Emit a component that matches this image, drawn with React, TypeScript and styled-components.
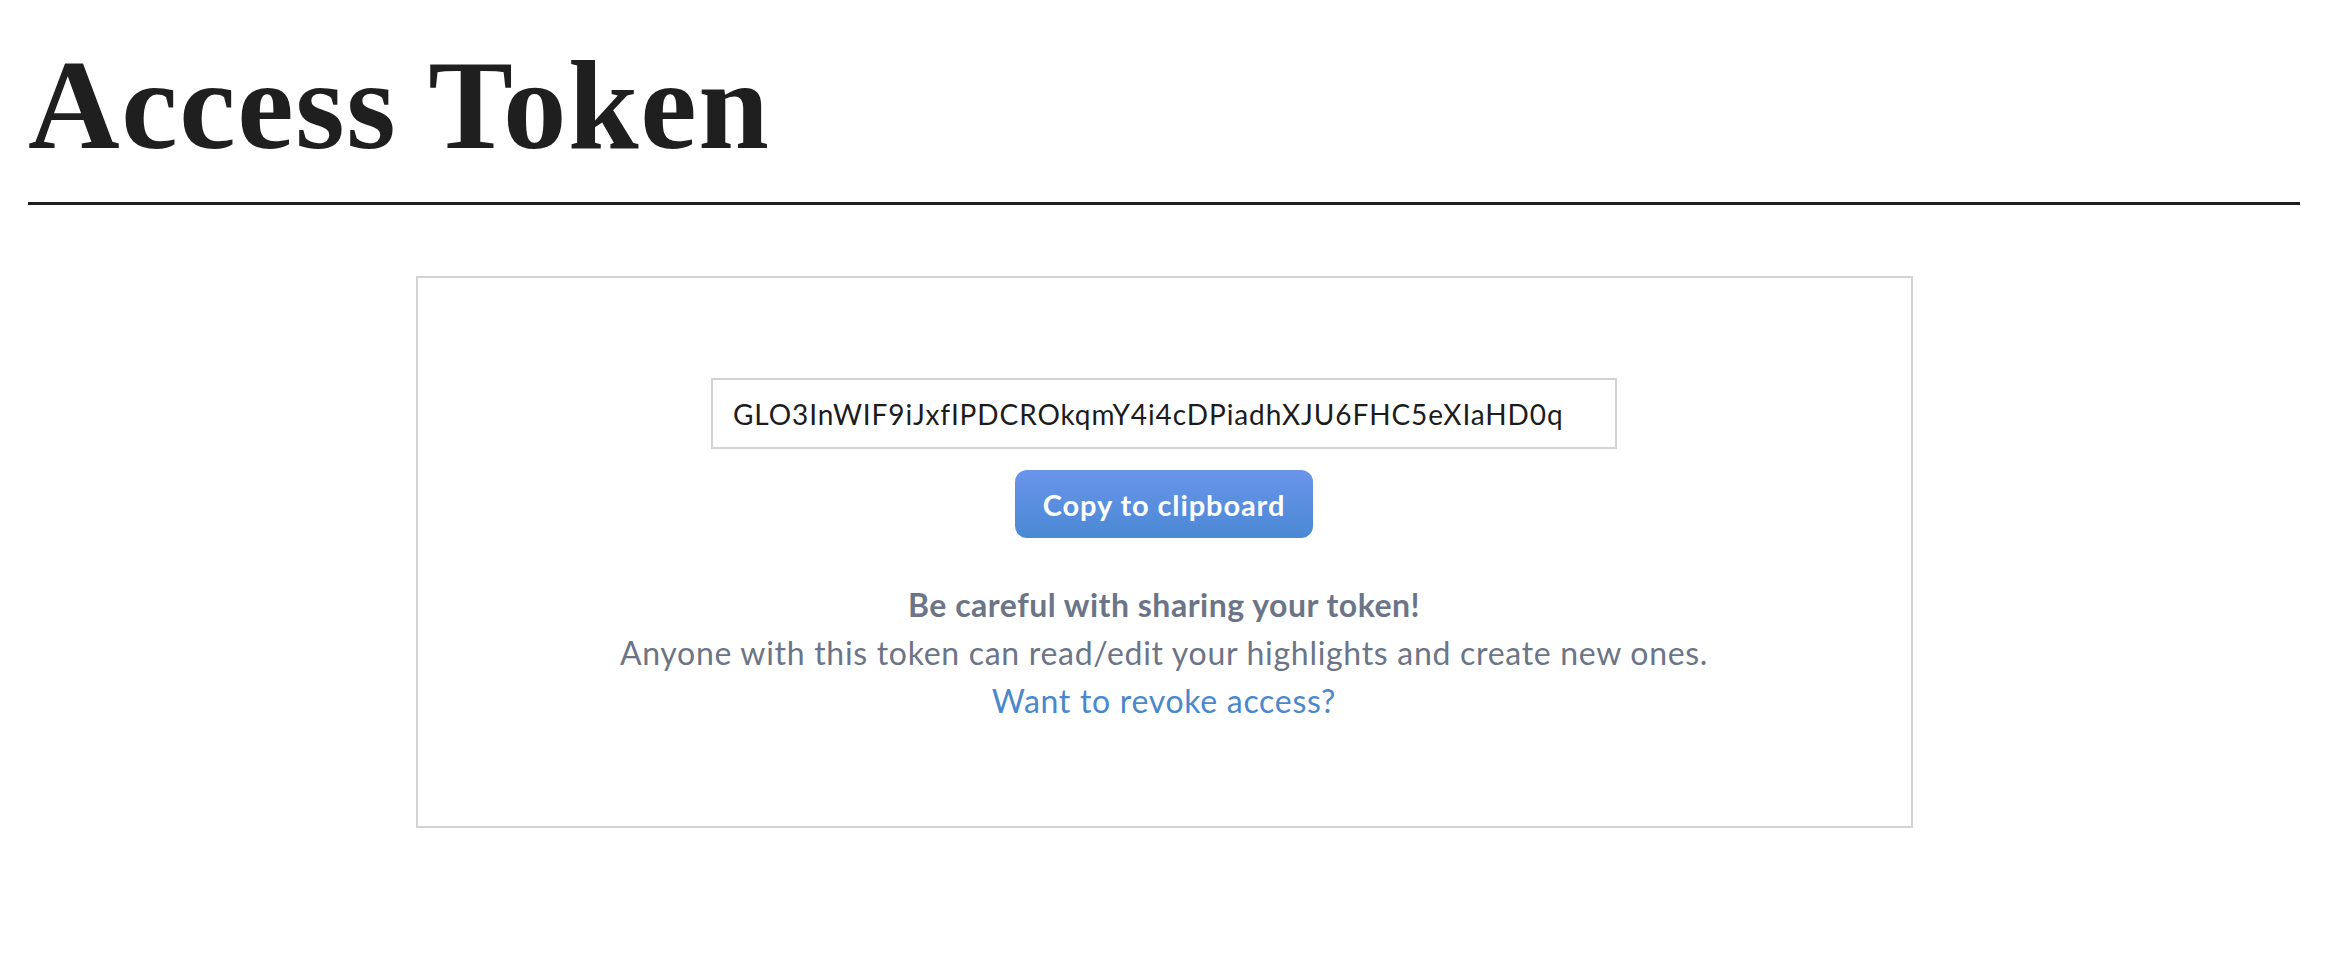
import React from 'react';
import styled, {createGlobalStyle} from 'styled-components';

const GlobalStyle = createGlobalStyle`
  html, body {
    margin: 0;
    padding: 0;
    background: #fff;
  }
  body {
    font-family: Lato, "Noto Sans", sans-serif;
  }
`;

const Page = styled.main`
  padding: 0 46px 0 28px;
`;

const Header = styled.header`
  padding-top: 42px;
  padding-bottom: 33px;
  border-bottom: 3px solid #1f1f1f;
`;

const Title = styled.h1`
  margin: 0;
  font-family: "Liberation Serif", "Times New Roman", serif;
  font-weight: 700;
  font-size: 127px;
  line-height: 127px;
  color: #1f1f1f;
  letter-spacing: 1.6px;
`;

const Card = styled.section`
  width: 1497px;
  box-sizing: border-box;
  margin: 71px auto 0;
  border: 2px solid #d3d3d3;
  padding: 100px 0 101px;
  display: flex;
  flex-direction: column;
  align-items: center;
`;

const TokenField = styled.input`
  width: 906px;
  height: 71px;
  box-sizing: border-box;
  border: 2px solid #d3d3d3;
  padding: 0 20px;
  font-family: Lato, "Noto Sans", sans-serif;
  font-size: 28px;
  letter-spacing: 0.9px;
  color: #1c1c1c;
  outline: none;
`;

const CopyButton = styled.button`
  margin-top: 21px;
  height: 68px;
  padding: 0 28px;
  border: none;
  border-radius: 12px;
  background: linear-gradient(to bottom, #6a94ea, #4a89d4);
  color: #fff;
  font-family: Lato, "Noto Sans", sans-serif;
  font-weight: 700;
  font-size: 29px;
  letter-spacing: 0.9px;
  cursor: pointer;
`;

const Notice = styled.div`
  margin-top: 43px;
  text-align: center;
  font-size: 32px;
  line-height: 48px;
  letter-spacing: 0.7px;
  color: #6b7587;
`;

const Line = styled.p<{$strong?: boolean}>`
  margin: 0;
  font-weight: ${p => (p.$strong ? 700 : 400)};
  letter-spacing: ${p => (p.$strong ? '0.5px' : 'inherit')};
`;

const RevokeLink = styled.a`
  color: #4a87cc;
  text-decoration: none;
`;

const TOKEN = 'GLO3InWIF9iJxfIPDCROkqmY4i4cDPiadhXJU6FHC5eXIaHD0q';

export default function App() {
  return (
    <>
      <GlobalStyle />
      <Page>
        <Header>
          <Title>Access Token</Title>
        </Header>
        <Card>
          <TokenField readOnly value={TOKEN} />
          <CopyButton>Copy to clipboard</CopyButton>
          <Notice>
            <Line $strong>Be careful with sharing your token!</Line>
            <Line>Anyone with this token can read/edit your highlights and create new ones.</Line>
            <Line>
              <RevokeLink href="#">Want to revoke access?</RevokeLink>
            </Line>
          </Notice>
        </Card>
      </Page>
    </>
  );
}
